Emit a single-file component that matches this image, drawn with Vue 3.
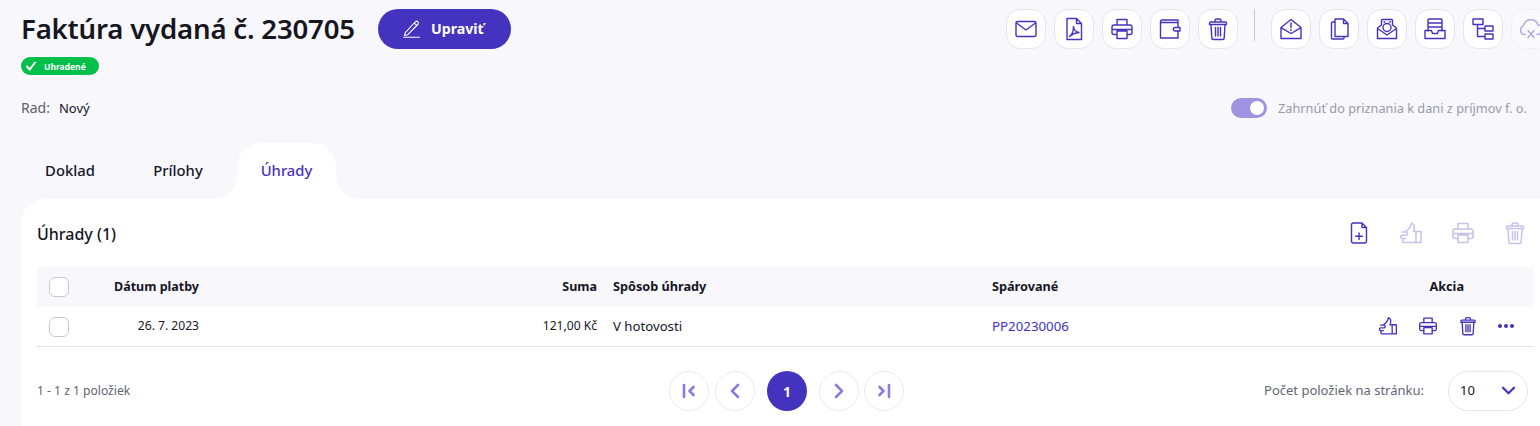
<script setup>
const p = {
  mail: 'M3.500 4.500h17A1.500 1.500 0 0 1 22 6v12a1.500 1.500 0 0 1-1.500 1.500h-17A1.500 1.500 0 0 1 2 18V6a1.500 1.500 0 0 1 1.500-1.500zM2.500 6 12 13l9.500-7',
  pdf: 'M5 1.500h9.500L19.500 6.500V22.500H5zM14.500 1.500v5h5M7.500 19.500c2.500-1.500 4-5.500 4-10 .5 3.500 2.500 5.500 5.500 6-3.500.2-6.500 1.500-9.500 4z',
  print: 'M7 8V2.500h10V8M7 17.500H4a2 2 0 0 1-2-2V10a2 2 0 0 1 2-2h16a2 2 0 0 1 2 2v5.500a2 2 0 0 1-2 2h-3M7 14h10v7.500H7zM2 12.500h20',
  wallet: 'M20 10.500V3H4a1.500 1.500 0 0 0-1.500 1.500V21H20V14M2.500 5.500H20M17 10.500h5v3.500h-5a1.750 1.750 0 0 1 0-3.500z',
  trash: 'M4.500 5h15a1 1 0 0 1 1 1v1.500h-17V6a1 1 0 0 1 1-1zM9 5V3.500A1.500 1.500 0 0 1 10.500 2h3A1.500 1.500 0 0 1 15 3.500V5M5 7.500l.8 13.500a1.500 1.500 0 0 0 1.500 1.500h9.400a1.500 1.500 0 0 0 1.500-1.500l.8-13.500M9.500 10.500v8.500M12 10.500v8.500M14.500 10.500v8.500',
  alert: 'M2 10.500 12 2.500l10 8V21.500H2zM2.300 10.800 12 16.500l9.700-5.700M12 6v4.500M12 12.500v1',
  copy: 'M8 2h8.500L21 6.500V19.500H8zM16.500 2V6.500H21M8 5H5.500c-.5 0-1 .5-1 1v15c0 .5.5 1 1 1H16c.5 0 1-.5 1-1v-1.500',
  money: 'M6.500 8V3.500a1 1 0 0 1 1-1h9a1 1 0 0 1 1 1V8M6.500 8 2.500 11V21.500h19V11l-4-3M2.500 11.500 12 18l9.500-6.500M12 6.500a4 4 0 1 1 0 8 4 4 0 0 1 0-8zM9 5h.8M14.500 5h.8',
  inbox: 'M5 14V3a1 1 0 0 1 1-1h12a1 1 0 0 1 1 1V14M5 6h14M5 10h14M2 13.500h6.500l1 3h5l1-3H22V21.500H2z',
  tree: 'M2 2h10v5.500H2zM14 9h8v5h-8zM14 17h8v5h-8zM6.500 7.500V19.500H14M6.500 11.500H14',
  cloud: 'M6.500 17.500H6a4.500 4.500 0 0 1-1.500-8.700A7.500 7.500 0 0 1 19 8a4.800 4.800 0 0 1-.5 9.500H18M9 13.500l6 7M15 13.500l-6 7',
  thumb: 'M3 11h4a1.500 1.500 0 0 1 0 3.200H3.300a1.600 1.600 0 0 0 0 3.300h3.200M3.500 17.500v2.500c0 .8.700 1.500 1.500 1.500h17V10.500h-7.500c1.500-4.500 1-7.500-2-8.500-.5 4-3 6.500-6 8.500M17 10.500V21.500',
  filePlus: 'M6.500 2h8.500l4.500 4.500V20a2 2 0 0 1-2 2H6.500a2 2 0 0 1-2-2V4a2 2 0 0 1 2-2zM15 2v4.500h4.500M12 12v6.500M8.700 15.200h6.600',
}
const group1 = [p.mail, p.pdf, p.print, p.wallet, p.trash]
const group2 = [p.alert, p.copy, p.money, p.inbox, p.tree]
const tools = [p.filePlus, p.thumb, p.print, p.trash]
const rowActions = [p.thumb, p.print, p.trash]
</script>

<template>
  <div class="page">
    <header class="top">
      <div class="title-block">
        <div class="title-row">
          <h1>Faktúra vydaná č. 230705</h1>
          <button class="edit">
            <svg viewBox="0 0 24 24" class="edit-ico"><path d="M4 17.500 16 4.500a2.200 2.200 0 0 1 3.200 3L7 20l-4 1zM14.500 6l3.500 3.200M2 23h19" /></svg>
            Upraviť
          </button>
        </div>
        <span class="badge">
          <svg viewBox="0 0 12 12"><path d="M2 6.500 4.800 9.500 10 2.500" /></svg>
          Uhradené
        </span>
      </div>
      <div class="top-tools">
        <button v-for="(d, i) in group1" :key="i" class="ibtn"><svg viewBox="0 0 24 24" class="ico"><path :d="d" /></svg></button>
        <span class="divider"></span>
        <button v-for="(d, i) in group2" :key="i" class="ibtn"><svg viewBox="0 0 24 24" class="ico"><path :d="d" /></svg></button>
        <button class="ibtn off"><svg viewBox="0 0 24 24" class="ico"><path :d="p.cloud" /></svg></button>
      </div>
    </header>

    <div class="meta">
      <div class="series"><span class="k">Rad:</span><span>Nový</span></div>
      <div class="toggle-wrap"><span class="toggle"><i></i></span><span>Zahrnúť do priznania k dani z príjmov f. o.</span></div>
    </div>

    <nav class="tabs">
      <a>Doklad</a>
      <a>Prílohy</a>
      <a class="active">Úhrady</a>
    </nav>

    <section class="card">
      <div class="card-head">
        <h2>Úhrady (1)</h2>
        <div class="card-tools">
          <svg v-for="(d, i) in tools" :key="i" viewBox="0 0 24 24" class="ico" :class="{ faint: i > 0 }"><path :d="d" /></svg>
        </div>
      </div>

      <div class="grid head">
        <span class="cb"></span>
        <span class="r">Dátum platby</span>
        <span class="r">Suma</span>
        <span>Spôsob úhrady</span>
        <span>Spárované</span>
        <span class="akcia">Akcia</span>
      </div>
      <div class="grid row">
        <span class="cb"></span>
        <span class="r">26. 7. 2023</span>
        <span class="r">121,00 Kč</span>
        <span class="method">V hotovosti</span>
        <span class="link">PP20230006</span>
        <span class="actions">
          <svg v-for="(d, i) in rowActions" :key="i" viewBox="0 0 24 24" class="ico small"><path :d="d" /></svg>
          <span class="dots"><i></i><i></i><i></i></span>
        </span>
      </div>

      <footer class="foot">
        <span class="count">1 - 1 z 1 položiek</span>
        <div class="pager">
          <button class="pg"><svg viewBox="0 0 16 16"><path d="M3 2v12M12.500 4 8.500 8l4 4" /></svg></button>
          <button class="pg"><svg viewBox="0 0 16 16"><path d="M11 2 5 8l6 6" /></svg></button>
          <button class="pg cur">1</button>
          <button class="pg"><svg viewBox="0 0 16 16"><path d="M5 2l6 6-6 6" /></svg></button>
          <button class="pg"><svg viewBox="0 0 16 16"><path d="M13 2v12M3.500 4l4 4-4 4" /></svg></button>
        </div>
        <div class="per">
          <span>Počet položiek na stránku:</span>
          <div class="select"><span>10</span><svg viewBox="0 0 16 12"><path d="M2 3l6 6 6-6" /></svg></div>
        </div>
      </footer>
    </section>
  </div>
</template>

<style>
html, body { margin: 0; background: #f7f7fc; }
</style>

<style scoped>
.page {
  width: 1540px;
  height: 426px;
  overflow: hidden;
  background: #f7f7fc;
  font-family: "Noto Sans", sans-serif;
  font-size: 13px;
  color: #16161f;
  display: flex;
  flex-direction: column;
}
button { font-family: inherit; padding: 0; cursor: pointer; }
svg { fill: none; stroke: currentColor; stroke-linecap: round; stroke-linejoin: round; display: block; }

.top { display: flex; justify-content: space-between; padding: 9px 0 0 21px; height: 66px; }
.title-row { display: flex; align-items: center; height: 40px; }
h1 { margin: -2px 0 0 0; font-size: 27.600px; font-weight: 600; line-height: 40px; letter-spacing: -0.2px; width: 357px; white-space: nowrap; }
.edit {
  display: flex; align-items: center; gap: 9px;
  width: 133px; height: 40px; padding: 0 0 2px 24px;
  background: #4333bf; color: #fff; border: 0; border-radius: 20px;
  font-size: 14.200px; font-weight: 700;
}
.edit-ico { width: 20px; height: 20px; stroke-width: 1.300; }
.badge {
  display: inline-flex; align-items: center; gap: 7px;
  margin-top: 8px; width: 78px; height: 18px; box-sizing: border-box; padding-left: 4px;
  background: #00c04b; color: #fff; border-radius: 9px;
  font-size: 8.500px; font-weight: 700;
}
.badge svg { width: 12px; height: 12px; stroke-width: 2; }

.top-tools { display: flex; gap: 8px; margin-right: -11px; align-items: flex-start; }
.ibtn {
  width: 40px; height: 40px; box-sizing: border-box;
  display: flex; align-items: center; justify-content: center;
  background: #fff; border: 1px solid #e6e5ee; border-radius: 14px; color: #4333bf;
}
.ibtn.off { opacity: 0.4; }
.ico { width: 24px; height: 24px; stroke-width: 1.400; color: #4333bf; }
.ico.faint { color: #c7c1ec; stroke-width: 1.500; }
.ico.small { width: 20px; height: 20px; stroke-width: 1.600; }
.divider { width: 1px; height: 32px; margin: 0 8px; background: #c9c9d2; }

.meta { display: flex; justify-content: space-between; align-items: center; height: 20px; margin-top: 23px; padding: 0 13px 0 21px; }
.series { display: flex; gap: 9px; align-items: baseline; margin-top: -2px; }
.k { color: #5f6068; font-size: 14px; }
.toggle-wrap { display: flex; align-items: center; gap: 11px; color: #9a9aa6; font-size: 12.750px; }
.toggle { width: 36px; height: 20px; border-radius: 10px; background: #a094e0; position: relative; display: block; }
.toggle i { position: absolute; right: 3px; top: 3px; width: 14px; height: 14px; border-radius: 50%; background: #fff; }

.tabs { display: flex; gap: 10px; margin-top: 25px; padding-left: 21px; height: 56px; flex: none; }
.tabs a {
  width: 98px; display: flex; align-items: center; justify-content: center;
  font-size: 14.800px; font-weight: 500; position: relative; padding-bottom: 3px; box-sizing: border-box;
}
.tabs .active { width: 99px; background: #fff; color: #4a2fc0; border-radius: 24px 24px 0 0; }
.tabs .active::before, .tabs .active::after {
  content: ""; position: absolute; bottom: 0; width: 24px; height: 24px;
}
.tabs .active::before { left: -24px; background: radial-gradient(circle at 0 0, transparent 23.500px, #fff 24px); }
.tabs .active::after { right: -24px; background: radial-gradient(circle at 100% 0, transparent 23.500px, #fff 24px); }

.card {
  flex: 1; margin-left: 21px; padding: 0 6px 0 16px;
  background: #fff; border-radius: 24px 0 0 0;
}
.card-head { display: flex; justify-content: space-between; align-items: center; height: 68px; }
h2 { margin: 0; font-size: 16px; font-weight: 500; padding-top: 1px; }
.card-tools { display: flex; gap: 28px; margin-right: 7px; }

.grid {
  display: grid;
  grid-template-columns: 62px 100px 398px 395px 378px 164px;
  align-items: center;
  height: 40px;
  box-sizing: border-box;
}
.grid > :nth-child(4) { padding-left: 16px; }
.grid > :first-child { margin-left: 12px; }
.grid > :not(:first-child) { padding-bottom: 2px; }
.head { background: #f7f7fc; font-size: 12.700px; font-weight: 700; }
.head .r { font-size: 12.500px; }
.row { border-bottom: 1px solid #e3e3e8; font-size: 12.100px; }
.method { font-size: 13.200px; }
.link { color: #4333bf; font-size: 13.300px; }
.cb { width: 20px; height: 20px; box-sizing: border-box; background: #fff; border: 1px solid #c9c9cf; border-radius: 6px; }
.r { text-align: right; }
.akcia { text-align: right; padding-right: 70px; }
.actions { display: flex; align-items: center; gap: 20px; padding-left: 8px; }
.dots { display: flex; gap: 2px; margin-left: -1px; width: 18px; justify-content: center; }
.dots i { width: 4px; height: 4px; border-radius: 50%; background: #4333bf; }

.foot { display: flex; align-items: center; height: 88px; padding: 0 6px 2px 0; box-sizing: border-box; color: #5f6670; }
.count { width: 632px; font-size: 12.100px; flex: none; }
.pager { display: flex; align-items: center; margin-top: 2px; }
.pg {
  width: 40px; height: 40px; border-radius: 50%; box-sizing: border-box;
  border: 1px solid #eceaf2; background: #fff; color: #8a7ce0;
  display: flex; align-items: center; justify-content: center;
}
.pg + .pg { margin-left: 6px; }
.pg:nth-child(3), .pg:nth-child(4) { margin-left: 12px; }
.pg:nth-child(5) { margin-left: 5px; }
.pg svg { width: 16px; height: 16px; stroke-width: 2.600; }
.cur { background: #4333bf; border: 0; color: #fff; font-weight: 700; font-size: 14px; }
.per { margin-left: auto; display: flex; align-items: center; gap: 24px; font-size: 13px; }
.select {
  width: 80px; height: 40px; box-sizing: border-box; padding: 0 11px 2px; margin-top: 2px;
  display: flex; align-items: center; justify-content: space-between;
  background: #fff; border: 1px solid #e6e5ee; border-radius: 20px; color: #16161f;
}
.select svg { width: 15px; height: 11px; stroke-width: 2.400; color: #4333bf; }
</style>
